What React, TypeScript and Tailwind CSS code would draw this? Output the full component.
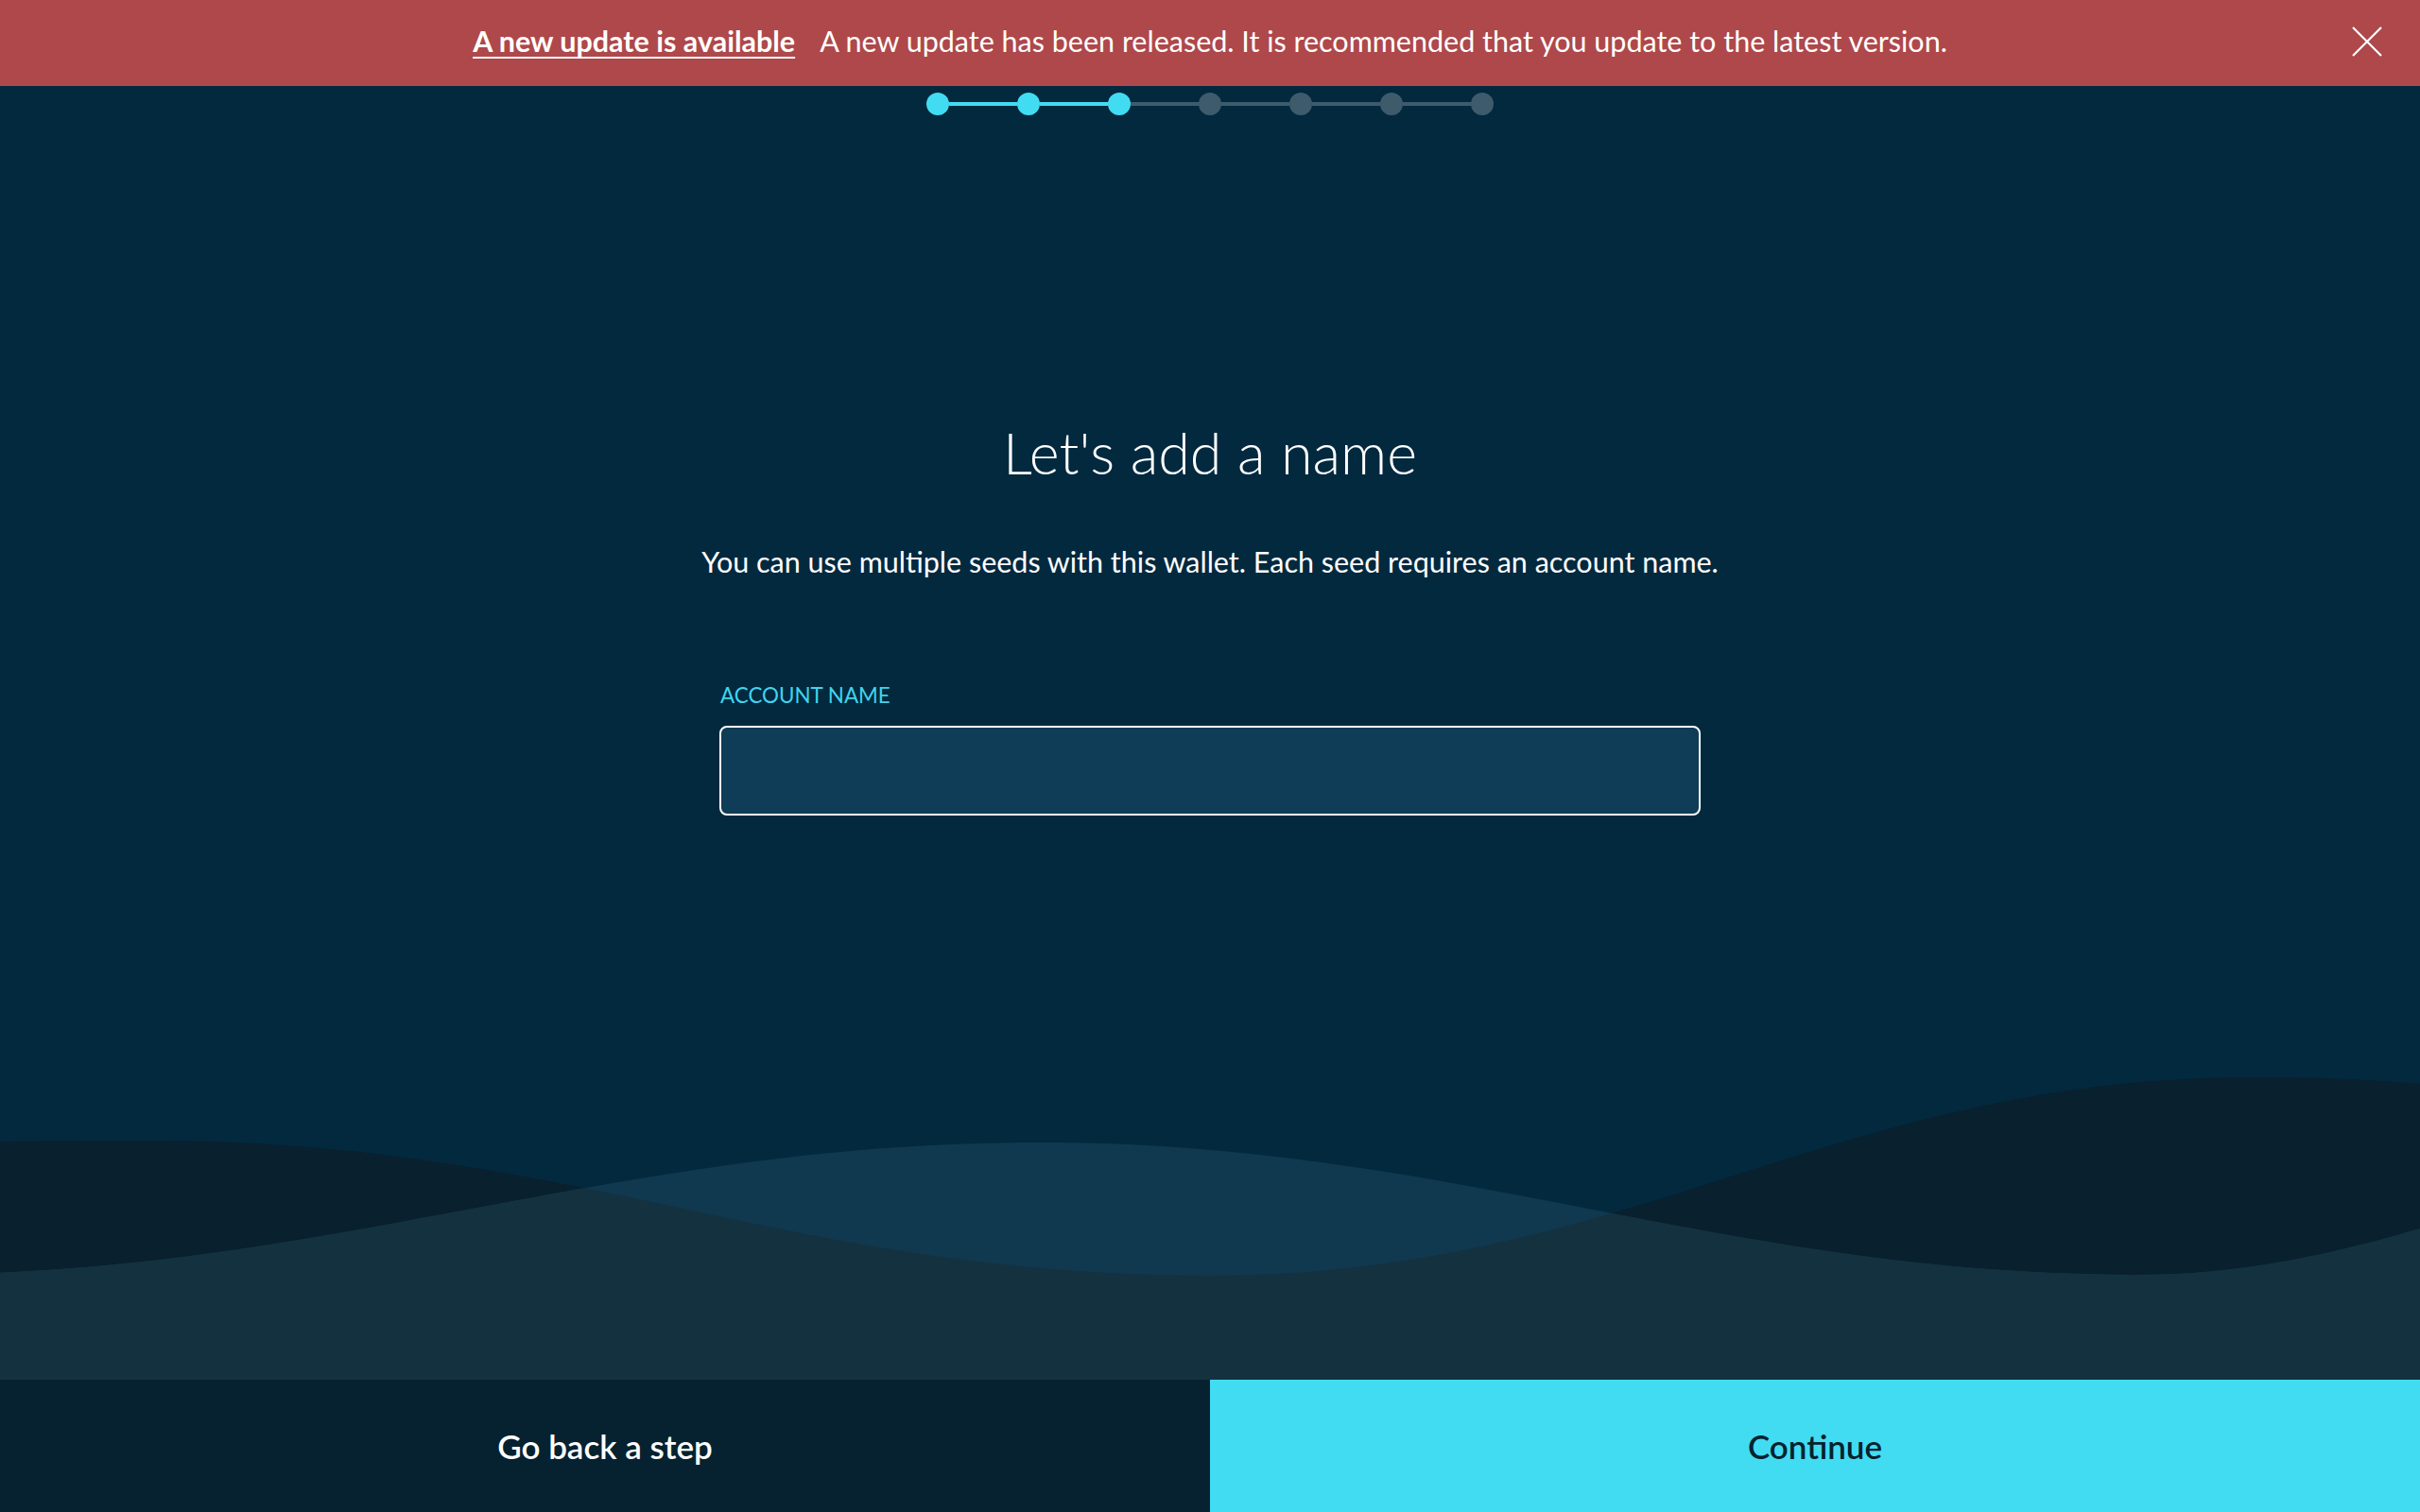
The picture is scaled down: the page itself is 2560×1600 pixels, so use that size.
const steps = [0, 1, 2, 3, 4, 5, 6];
const current = 2;

const WAVE_BACK =
  "M0 1208 C 60 1207, 100 1207, 160 1207 C 608 1207, 832 1350, 1280 1350 C 1721 1350, 1941 1140, 2382 1140 C 2460 1140, 2520 1143, 2560 1147 L 2560 1460 L 0 1460 Z";
const WAVE_FRONT =
  "M -100 1349 C 356 1349, 644 1209, 1100 1209 C 1541 1209, 1819 1349, 2260 1349 C 2541 1349, 2719 1209, 3000 1209 L 3000 1460 L -100 1460 Z";

const Progress = () => (
  <div className="flex items-center justify-center pt-[7px]">
    {steps.map(i => (
      <div key={i} className="flex items-center">
        {i > 0 && (
          <div className={`h-1 w-[72px] ${i <= current ? "bg-[#42dcf2]" : "bg-[#3e5b6c]"}`} />
        )}
        <div className={`w-6 h-6 rounded-full ${i <= current ? "bg-[#42dcf2]" : "bg-[#3e5b6c]"}`} />
      </div>
    ))}
  </div>
);

const Waves = () => (
  <svg className="block w-full h-[360px]" viewBox="0 1100 2560 360" preserveAspectRatio="none">
    <defs>
      <clipPath id="backClip">
        <path d={WAVE_BACK} />
      </clipPath>
    </defs>
    <path d={WAVE_BACK} fill="#09202e" />
    <path d={WAVE_FRONT} fill="#10384f" />
    <path d={WAVE_FRONT} fill="#14313f" clipPath="url(#backClip)" />
  </svg>
);

export default function App() {
  return (
    <div className="w-full h-screen flex flex-col bg-[#03293f] text-white font-['Lato',_'Liberation_Sans',_sans-serif] overflow-hidden">
      {/* UPDATE BANNER */}
      <div className="h-[91px] shrink-0 bg-[#ae484a] flex items-center justify-center relative">
        <div className="flex items-center gap-[26px] text-[30.5px] leading-none -mt-1">
          <span className="font-bold underline underline-offset-[5px] decoration-2">A new update is available</span>
          <span>A new update has been released. It is recommended that you update to the latest version.</span>
        </div>
        <button className="absolute left-[2488px] top-[28px] text-white">
          <svg width="32" height="32" viewBox="0 0 32 32" fill="none" stroke="currentColor" strokeWidth="2.2">
            <path d="M1 1 L31 31 M31 1 L1 31" />
          </svg>
        </button>
      </div>

      {/* MAIN */}
      <div className="flex-1 flex flex-col">
        <Progress />
        <div className="flex flex-col items-center">
          <h1 className="mt-[318px] text-[61px] leading-[77px] font-light">Let's add a name</h1>
          <p className="mt-[59px] text-[30.5px] leading-[36px]">
            You can use multiple seeds with this wallet. Each seed requires an account name.
          </p>
          <div className="mt-[110px] w-[1038px] flex flex-col">
            <label className="pl-[1px] text-[22.4px] leading-[28px] text-[#42d3ee]">ACCOUNT NAME</label>
            <input
              className="mt-[18px] h-[95px] w-full rounded-lg border-2 border-white bg-[#0f3c57] px-6 text-[28px] text-white outline-none"
              type="text"
            />
          </div>
        </div>
        <div className="flex-1" />
        <Waves />
      </div>

      {/* FOOTER */}
      <div className="h-[140px] shrink-0 flex">
        <button className="flex-1 bg-[#062230] text-white text-[35px] font-semibold">Go back a step</button>
        <button className="flex-1 bg-[#42dcf2] text-[#06222f] text-[35px] font-semibold">Continue</button>
      </div>
    </div>
  );
}
